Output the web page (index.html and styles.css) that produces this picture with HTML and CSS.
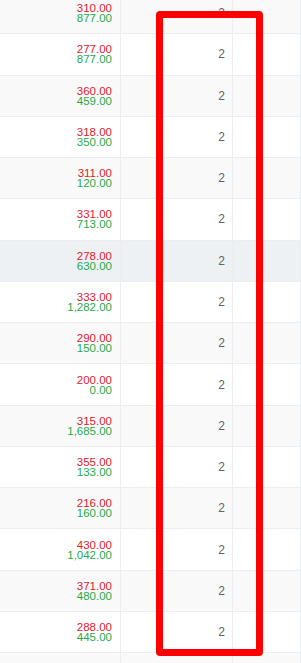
FILE: index.html
```html
<!DOCTYPE html>
<html>
<head>
<meta charset="utf-8">
<link rel="stylesheet" href="styles.css">
</head>
<body>
<div class="viewport">
  <div class="table">
    <div class="row odd"><div class="c1"><span class="r">310.00</span><span class="g">877.00</span></div><div class="c2">2</div><div class="c3"></div></div>
    <div class="row"><div class="c1"><span class="r">277.00</span><span class="g">877.00</span></div><div class="c2">2</div><div class="c3"></div></div>
    <div class="row odd"><div class="c1"><span class="r">360.00</span><span class="g">459.00</span></div><div class="c2">2</div><div class="c3"></div></div>
    <div class="row"><div class="c1"><span class="r">318.00</span><span class="g">350.00</span></div><div class="c2">2</div><div class="c3"></div></div>
    <div class="row odd"><div class="c1"><span class="r">311.00</span><span class="g">120.00</span></div><div class="c2">2</div><div class="c3"></div></div>
    <div class="row"><div class="c1"><span class="r">331.00</span><span class="g">713.00</span></div><div class="c2">2</div><div class="c3"></div></div>
    <div class="row hover"><div class="c1"><span class="r">278.00</span><span class="g">630.00</span></div><div class="c2">2</div><div class="c3"></div></div>
    <div class="row"><div class="c1"><span class="r">333.00</span><span class="g">1,282.00</span></div><div class="c2">2</div><div class="c3"></div></div>
    <div class="row odd"><div class="c1"><span class="r">290.00</span><span class="g">150.00</span></div><div class="c2">2</div><div class="c3"></div></div>
    <div class="row"><div class="c1"><span class="r">200.00</span><span class="g">0.00</span></div><div class="c2">2</div><div class="c3"></div></div>
    <div class="row odd"><div class="c1"><span class="r">315.00</span><span class="g">1,685.00</span></div><div class="c2">2</div><div class="c3"></div></div>
    <div class="row"><div class="c1"><span class="r">355.00</span><span class="g">133.00</span></div><div class="c2">2</div><div class="c3"></div></div>
    <div class="row odd"><div class="c1"><span class="r">216.00</span><span class="g">160.00</span></div><div class="c2">2</div><div class="c3"></div></div>
    <div class="row"><div class="c1"><span class="r">430.00</span><span class="g">1,042.00</span></div><div class="c2">2</div><div class="c3"></div></div>
    <div class="row odd"><div class="c1"><span class="r">371.00</span><span class="g">480.00</span></div><div class="c2">2</div><div class="c3"></div></div>
    <div class="row"><div class="c1"><span class="r">288.00</span><span class="g">445.00</span></div><div class="c2">2</div><div class="c3"></div></div>
    <div class="row odd"><div class="c1"></div><div class="c2"></div><div class="c3"></div></div>
  </div>
  <div class="mark"></div>
</div>
</body>
</html>
```
FILE: styles.css
```css
html, body {
  margin: 0;
  padding: 0;
  background: #fff;
}
.viewport {
  position: relative;
  width: 301px;
  height: 663px;
  overflow: hidden;
  font-family: "Liberation Sans", Arial, sans-serif;
}
.table {
  margin-top: -7px;
}
.row {
  display: grid;
  grid-template-columns: 121px 112px 68px;
  height: 41.27px;
  box-sizing: border-box;
  border-bottom: 1px solid #ebeef0;
  background: #fff;
}
.row.odd {
  background: #f9f9f9;
}
.row.hover {
  background: #eef1f3;
}
.c1, .c2, .c3 {
  border-right: 1px solid #ebeef0;
}
.c1 {
  display: flex;
  flex-direction: column;
  align-items: flex-end;
  justify-content: center;
  padding-right: 8px;
  font-size: 11.5px;
  line-height: 10px;
}
.c2 {
  display: flex;
  align-items: center;
  justify-content: flex-end;
  padding-right: 7px;
  font-size: 12px;
  color: #606266;
}
.r {
  color: #e0202b;
}
.g {
  color: #1faa4a;
}
.mark {
  position: absolute;
  left: 156px;
  top: 11px;
  width: 107px;
  height: 645px;
  box-sizing: border-box;
  border: 7.5px solid #ff0000;
  border-radius: 4px;
}
```
